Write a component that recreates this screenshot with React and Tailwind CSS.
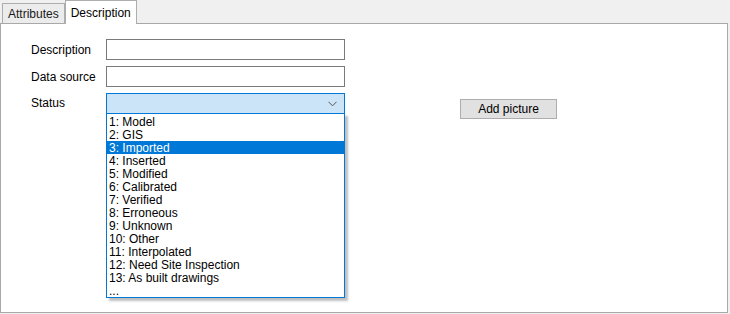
import React from "react";

const statuses = [
  "1: Model",
  "2: GIS",
  "3: Imported",
  "4: Inserted",
  "5: Modified",
  "6: Calibrated",
  "7: Verified",
  "8: Erroneous",
  "9: Unknown",
  "10: Other",
  "11: Interpolated",
  "12: Need Site Inspection",
  "13: As built drawings",
  "...",
];

const TextBox = () => (
  <div className="w-[239px] h-[21px] border border-[#7a7a7a] bg-white" />
);

const App = () => {
  const selected = 2;

  return (
    <div
      className="w-[730px] h-[314px] bg-[#f0f0f0] text-[12px] text-black leading-none"
      style={{ fontFamily: '"Liberation Sans", Arial, sans-serif' }}
    >
      {/* tabs */}
      <div className="flex items-end h-[23px] pl-[2px]">
        <div className="h-[20px] px-[5px] flex items-center border border-b-0 border-[#adadad] bg-[#ececec] text-[#1a1a1a]">
          Attributes
        </div>
        <div className="relative z-10 -mb-px h-[24px] px-[5px] flex items-center border border-b-0 border-[#adadad] bg-white">
          Description
        </div>
      </div>

      {/* panel */}
      <div className="w-[728px] h-[290px] border border-[#a8a8a8] bg-white pt-[15px] pl-[30px]">
        <div className="flex flex-col gap-[6px]">
          <div className="flex items-center">
            <span className="w-[75px]">Description</span>
            <TextBox />
          </div>
          <div className="flex items-center">
            <span className="w-[75px]">Data source</span>
            <TextBox />
          </div>
          <div className="flex items-start">
            <span className="w-[75px] h-[20px] flex items-center">Status</span>
            <div className="relative">
              <div className="w-[239px] h-[21px] border border-[#0078d7] bg-[#cce4f7] flex items-center justify-end pr-[7px]">
                <svg width="9" height="6" viewBox="0 0 9 6" fill="none">
                  <path d="M0.5 0.8 L4.5 4.8 L8.5 0.8" stroke="#555" strokeWidth="1" />
                </svg>
              </div>
              <div className="absolute left-0 top-[20px] z-20 w-[239px] border border-[#0078d7] bg-white pt-px shadow-[3px_3px_2px_rgba(0,0,0,0.25)]">
                {statuses.map((s, i) => (
                  <div
                    key={s}
                    className={
                      i === selected
                        ? "h-[13px] px-[2px] flex items-center bg-[#0078d7] text-white"
                        : "h-[13px] px-[2px] flex items-center"
                    }
                  >
                    {s}
                  </div>
                ))}
              </div>
            </div>
            <button className="ml-[115px] mt-[6px] w-[97px] h-[20px] border border-[#adadad] bg-[#e1e1e1] text-[12px] text-black">
              Add picture
            </button>
          </div>
        </div>
      </div>
    </div>
  );
};

export default App;
